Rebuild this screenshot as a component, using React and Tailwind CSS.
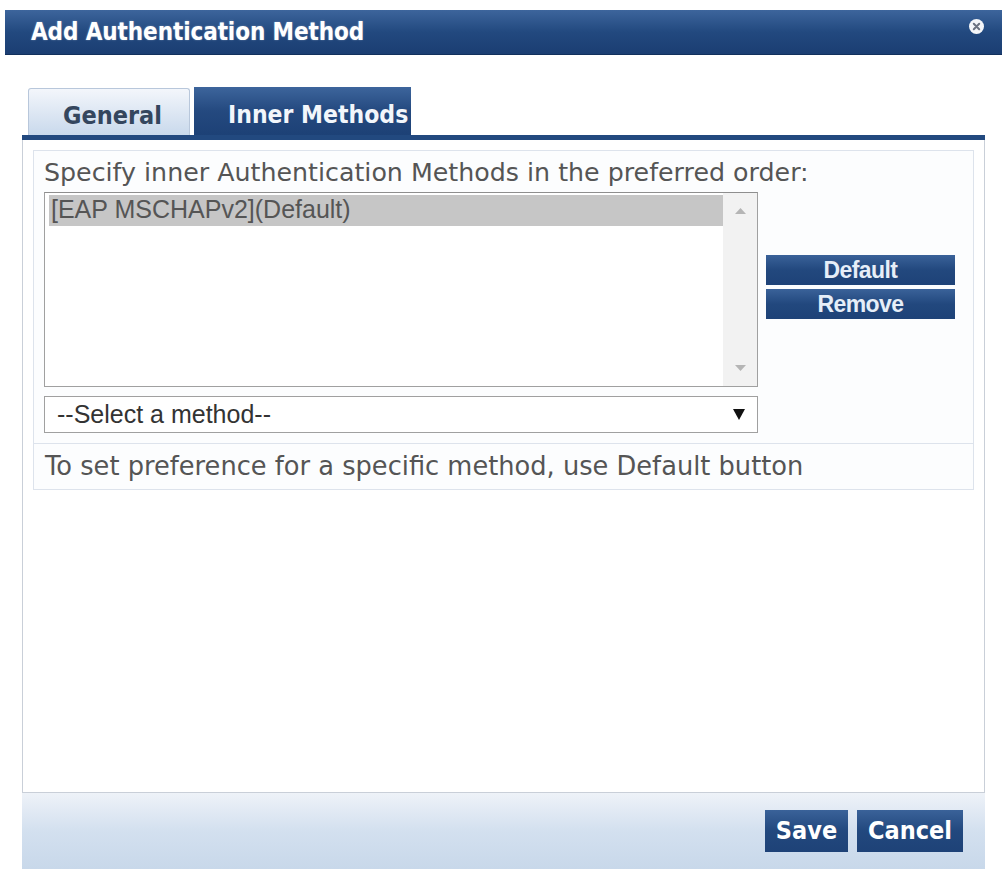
import React from "react";

const condensed = { fontFamily: '"DejaVu Sans Condensed", "DejaVu Sans", sans-serif' };
const verdana = { fontFamily: '"DejaVu Sans", Verdana, sans-serif' };
const arial = { fontFamily: '"Liberation Sans", Arial, sans-serif' };

function CloseIcon() {
  return (
    <svg width="17" height="17" viewBox="0 0 17 17" className="block">
      <circle cx="8.5" cy="8.5" r="7.5" fill="#f4f6f9" />
      <path d="M5.8 5.8 L11.2 11.2 M11.2 5.8 L5.8 11.2" stroke="#6b7280" strokeWidth="2" strokeLinecap="round" />
    </svg>
  );
}

const blueBtn = "bg-gradient-to-b from-[#3a6299] via-[#22487e] to-[#1e4277]";

export default function App() {
  return (
    <div className="w-[1006px] h-[873px] bg-white overflow-hidden">
      {/* dialog header */}
      <div className="pt-[10px] pl-[5px] pr-[4px]">
        <div className="h-[45px] flex items-center justify-between pl-[26px] pr-[17px] bg-gradient-to-b from-[#3d659c] via-[#22497f] to-[#1b3e72] border-b border-[#12305c]">
          <span
            className="text-white font-bold text-[24px] font-stretch-condensed tracking-[-0.1px] [text-shadow:0_0_2px_rgba(255,255,255,0.35)]"
            style={condensed}
          >
            Add Authentication Method
          </span>
          <div className="-mt-[12px]">
            <CloseIcon />
          </div>
        </div>
      </div>

      {/* tabs */}
      <div className="ml-[22px] w-[963px] mt-[32px]">
        <div className="flex items-end pl-[6px] h-[48px]">
          <div className="w-[162px] h-[47px] rounded-t-[3px] border border-b-0 border-[#b8c7db] bg-gradient-to-b from-[#f3f6fb] to-[#c9d9ec] flex items-center pl-[34px] pt-[8px]">
            <span className="font-bold text-[25px] text-[#34465e] font-stretch-condensed" style={condensed}>
              General
            </span>
          </div>
          <div className="ml-[4px] w-[217px] h-[48px] bg-gradient-to-b from-[#3d659c] via-[#24497f] to-[#1d4176] flex items-center pl-[34px] pt-[8px]">
            <span className="font-bold text-[24.5px] text-[#f2f6fb] font-stretch-condensed whitespace-nowrap" style={condensed}>
              Inner Methods
            </span>
          </div>
        </div>
        <div className="h-[5px] bg-[#22497f]" />

        {/* tab body */}
        <div className="h-[653px] border-x border-b border-[#c9cfd8] bg-white pt-[10px] pl-[10px]">
          <div className="w-[941px] h-[340px] border border-[#dde3ec] bg-[#fcfdfe] flex flex-col">
            <div className="h-[292px] pl-[10px] pt-[7px]">
              <div className="text-[25.3px] leading-[30px] text-[#555555]" style={verdana}>
                Specify inner Authentication Methods in the preferred order:
              </div>
              <div className="flex mt-[4px]">
                <div className="w-[714px]">
                  {/* list box */}
                  <div className="h-[195px] border border-[#a0a0a0] border-t-[#8e8e8e] bg-white flex">
                    <div className="flex-1 pl-[4px] pt-[2px]">
                      <div className="h-[31px] bg-[#c6c6c6] pl-[2px] text-[25px] leading-[28px] text-[#555555]" style={arial}>
                        [EAP MSCHAPv2](Default)
                      </div>
                    </div>
                    <div className="w-[34px] bg-[#f2f2f2] flex flex-col items-center justify-between pt-[14px] pb-[14px]">
                      <svg width="11" height="7" viewBox="0 0 11 7"><path d="M0 7 L5.5 1 L11 7 Z" fill="#b5b5b5" /></svg>
                      <svg width="11" height="7" viewBox="0 0 11 7"><path d="M0 0 L5.5 6 L11 0 Z" fill="#b5b5b5" /></svg>
                    </div>
                  </div>
                  {/* method select */}
                  <div className="mt-[9px] h-[37px] border border-[#a0a0a0] bg-white flex items-center justify-between pl-[12px] pr-[12px]">
                    <span className="text-[25px] text-[#333333]" style={arial}>
                      --Select a method--
                    </span>
                    <svg width="12" height="11" viewBox="0 0 12 11"><path d="M0 0 L12 0 L6 11 Z" fill="#111111" /></svg>
                  </div>
                </div>
                <div className="ml-[8px] w-[189px] pt-[63px] flex flex-col gap-[4px]">
                  {["Default", "Remove"].map((label) => (
                    <div
                      key={label}
                      className={`h-[30px] ${blueBtn} flex items-center justify-center text-[23px] font-bold text-[#e6eef8] tracking-[-0.6px]`}
                      style={arial}
                    >
                      {label}
                    </div>
                  ))}
                </div>
              </div>
            </div>
            <div className="flex-1 border-t border-[#dde3ec] pl-[11px] flex items-center text-[25.7px] text-[#555555]" style={verdana}>
              To set preference for a specific method, use Default button
            </div>
          </div>
        </div>

        {/* footer */}
        <div className="h-[76px] bg-gradient-to-b from-[#eef2f8] via-[#d3e0ef] to-[#c8d8ea] flex justify-end items-start pt-[17px] pr-[22px] gap-[9px]">
          <div
            className={`w-[83px] h-[42px] ${blueBtn} flex items-center justify-center text-white font-bold text-[25px] font-stretch-condensed`}
            style={condensed}
          >
            Save
          </div>
          <div
            className={`w-[106px] h-[42px] ${blueBtn} flex items-center justify-center text-white font-bold text-[25px] font-stretch-condensed`}
            style={condensed}
          >
            Cancel
          </div>
        </div>
      </div>
    </div>
  );
}
